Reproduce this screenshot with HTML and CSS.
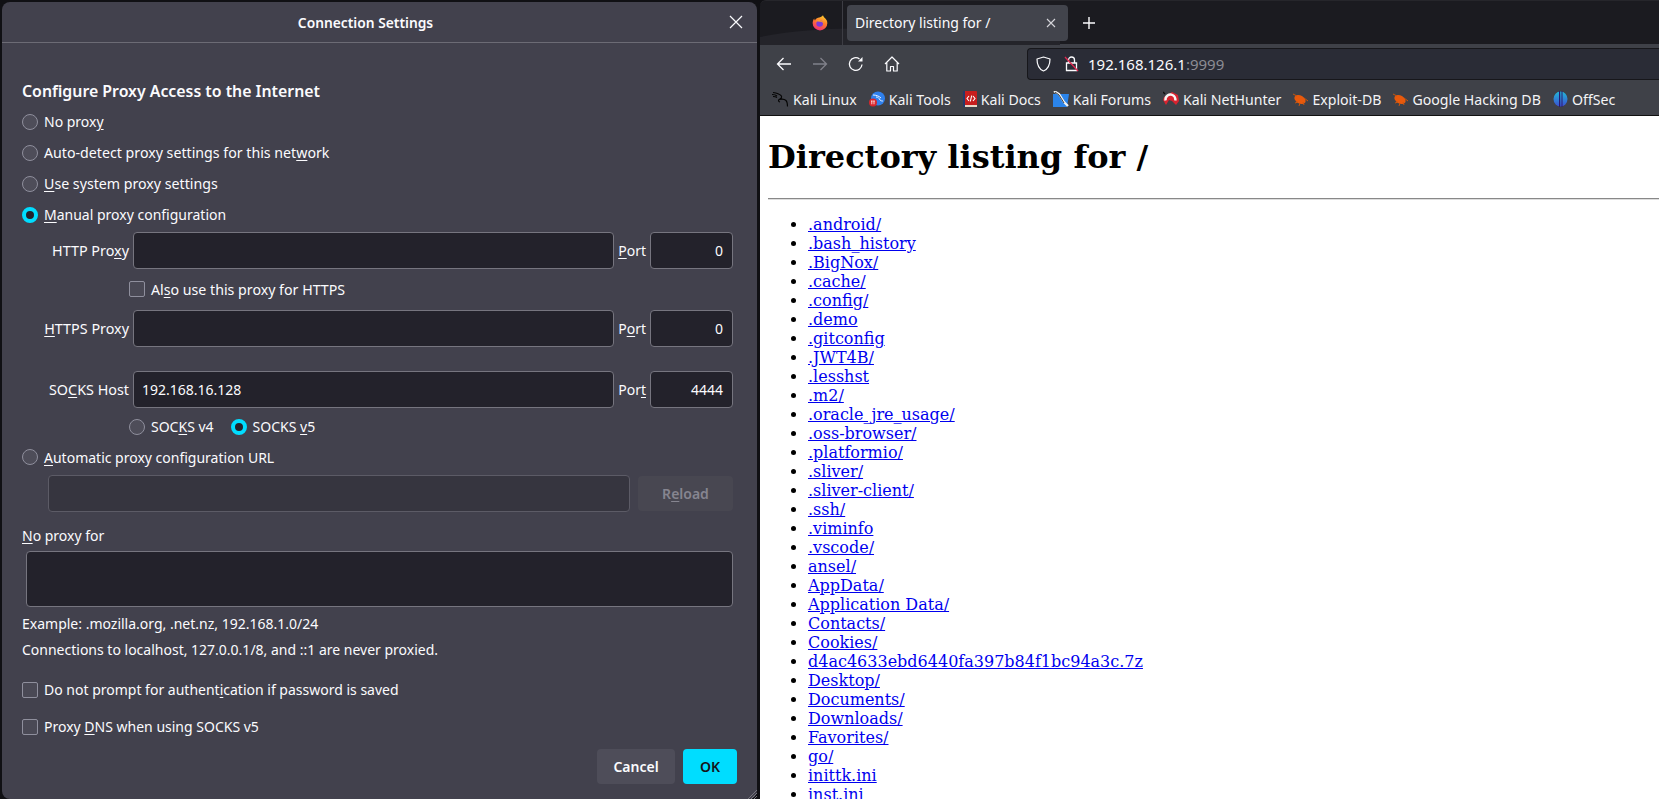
FILE: index.html
```html
<!DOCTYPE html>
<html lang="en">
<head>
<meta charset="utf-8">
<title>Connection Settings</title>
<link rel="stylesheet" href="styles.css">
</head>
<body>
<section class="dialog">
  <header class="dialog-head">
    <span class="dialog-title">Connection Settings</span>
    <svg class="dialog-close" width="14" height="14" viewBox="0 0 14 14"><path d="M1 1l12 12M13 1L1 13" stroke="#fbfbfe" stroke-width="1.2" fill="none"/></svg>
  </header>
  <div class="dialog-body">
    <h2 class="heading">Configure Proxy Access to the Internet</h2>
    <div class="opt"><i class="radio"></i><span>No prox<u>y</u></span></div>
    <div class="opt wide"><i class="radio"></i><span>Auto-detect proxy settings for this net<u>w</u>ork</span></div>
    <div class="opt wide"><i class="radio"></i><span><u>U</u>se system proxy settings</span></div>
    <div class="opt"><i class="radio on"></i><span><u>M</u>anual proxy configuration</span></div>

    <div class="proxy-row first">
      <label>HTTP Pro<u>x</u>y</label><div class="field"></div>
      <label><u>P</u>ort</label><div class="field port">0</div>
    </div>
    <div class="sub-opt check-row wide"><i class="check"></i><span>Al<u>s</u>o use this proxy for HTTPS</span></div>
    <div class="proxy-row https">
      <label><u>H</u>TTPS Proxy</label><div class="field"></div>
      <label>P<u>o</u>rt</label><div class="field port">0</div>
    </div>
    <div class="proxy-row socks">
      <label>SO<u>C</u>KS Host</label><div class="field value">192.168.16.128</div>
      <label>Por<u>t</u></label><div class="field port">4444</div>
    </div>
    <div class="sub-opt socks-row">
      <i class="radio"></i><span>SOC<u>K</u>S v4</span>
      <i class="radio on second"></i><span>SOCKS <u>v</u>5</span>
    </div>
    <div class="opt auto"><i class="radio"></i><span><u>A</u>utomatic proxy configuration URL</span></div>
    <div class="url-row">
      <div class="field disabled"></div>
      <div class="btn-reload">R<u>e</u>load</div>
    </div>
    <div class="noproxy-label"><u>N</u>o proxy for</div>
    <div class="field textarea"></div>
    <p class="hint example">Example: .mozilla.org, .net.nz, 192.168.1.0/24</p>
    <p class="hint localhost">Connections to localhost, 127.0.0.1/8, and ::1 are never proxied.</p>
    <div class="opt prompt"><i class="check"></i><span>Do not prompt for authent<u>i</u>cation if password is saved</span></div>
    <div class="opt dns"><i class="check"></i><span>Proxy <u>D</u>NS when using SOCKS v5</span></div>
    <div class="actions">
      <div class="btn">Cancel</div>
      <div class="btn primary">OK</div>
    </div>
  </div>
  <svg class="grip" width="10" height="10" viewBox="0 0 10 10"><path d="M10 1L1 10M10 4L4 10M10 7L7 10" stroke="#77767f" stroke-width="1" fill="none"/></svg>
</section>

<section class="browser">
  <div class="tabbar">
    <svg class="swoosh" width="300" height="44" viewBox="0 0 300 44"><path d="M0 36C60 24 110 28 170 30L300 31V44H0z" fill="#24242a"/></svg>
    <svg class="ff" width="16" height="17" viewBox="0 0 24 24">
      <defs><linearGradient id="ffg" x1="0.7" y1="0" x2="0.3" y2="1"><stop offset="0" stop-color="#ffd02e"/><stop offset=".45" stop-color="#ff7a2b"/><stop offset="1" stop-color="#ee2a78"/></linearGradient></defs>
      <path d="M16.500 1c.6 2 2 3.200 3.200 4.600C22 8 23 10 23 13a11 11 0 1 1-22 0c0-2.500.8-5 2.300-7 0 1.200.4 2.200 1.200 3 .7-2 2.300-3.500 4.500-4.200C11.500 4 15 3.500 16.500 1z" fill="url(#ffg)"/>
      <circle cx="11.500" cy="13.500" r="5" fill="#7c3ad8"/>
      <path d="M5 10c2-1.500 5-2 8-1.300 2.500.7 4 2.600 4.200 4.800-1-1.700-2.700-2.500-4.700-2.500z" fill="#ff9a2b"/>
    </svg>
    <div class="tab-sep"></div>
    <div class="tab">
      <span class="tab-title">Directory listing for /</span>
      <svg width="10" height="10" viewBox="0 0 10 10"><path d="M1 1l8 8M9 1L1 9" stroke="#d5d5da" stroke-width="1.100" fill="none"/></svg>
    </div>
    <svg class="newtab" width="12" height="12" viewBox="0 0 12 12"><path d="M6 0v12M0 6h12" stroke="#fbfbfe" stroke-width="1.400" fill="none"/></svg>
  </div>
  <div class="navbar">
    <svg class="nav-ic back" width="16" height="16" viewBox="0 0 16 16"><path d="M15 8H1.500M7.500 2L1.500 8l6 6" stroke="#fbfbfe" stroke-width="1.300" fill="none"/></svg>
    <svg class="nav-ic fwd" width="16" height="16" viewBox="0 0 16 16"><path d="M1 8h13.500M8.500 2l6 6-6 6" stroke="#80818a" stroke-width="1.300" fill="none"/></svg>
    <svg class="nav-ic reload" width="16" height="16" viewBox="0 0 16 16"><path d="M14 8.500A6.300 6.300 0 1 1 11.500 3" stroke="#fbfbfe" stroke-width="1.300" fill="none"/><path d="M14.500 1v4.500H10z" fill="#fbfbfe"/></svg>
    <svg class="nav-ic home" width="16" height="16" viewBox="0 0 16 16"><path d="M1 8l7-7 7 7M2.800 6.500V15h3.700v-4.500h3V15h3.700V6.500" stroke="#fbfbfe" stroke-width="1.200" fill="none" stroke-linejoin="round"/></svg>
    <div class="urlbar">
      <svg class="shield" width="15" height="16" viewBox="0 0 15 16"><path d="M7.500 1L14 3c0 6-1.500 10-6.500 12C2.500 13 1 9 1 3z" stroke="#fbfbfe" stroke-width="1.200" fill="none" stroke-linejoin="round"/></svg>
      <svg class="lock" width="15" height="16" viewBox="0 0 15 16"><path d="M4.500 7V4a3 3 0 0 1 6 0v3M2.500 7h10v7.500h-10z" stroke="#fbfbfe" stroke-width="1.300" fill="none"/><path d="M1 1l13 14" stroke="#e22850" stroke-width="1.300"/></svg>
      <span class="url">192.168.126.1<span class="url-port">:9999</span></span>
    </div>
  </div>
  <div class="bookmarks">
    <div class="bm">
      <svg width="17" height="16" viewBox="0 0 17 16"><path d="M1 1.500c3 .5 6 1 8 3 1.500 1.500 0 3.500-2 4 2-.5 5-1 7 1 1.500 1.500 1.500 3.500 1.500 6M0 3.500c2 0 4 .5 5 1.500M1 5.500c1.500 0 3 .3 4 1M7 8.500c-1 1-.5 2 1 2.500" stroke="#050505" stroke-width="1.100" fill="none"/></svg>
      <span>Kali Linux</span></div>
    <div class="bm">
      <svg width="16" height="16" viewBox="0 0 16 16"><circle cx="9" cy="7.500" r="7" fill="#2f80ed"/><path d="M4 4c3 0 6 1 8 3M7 6c2 0 3 1 4 3 1 1 2 1 3 1" stroke="#e8f1ff" stroke-width="1" fill="none"/><circle cx="4" cy="11.500" r="4" fill="#d8262c"/><path d="M2.800 10v3.300M5 10v3.300M2 10h1.600M4.200 10h1.600" stroke="#fff" stroke-width=".8"/></svg>
      <span>Kali Tools</span></div>
    <div class="bm">
      <svg width="14" height="16" viewBox="0 0 14 16"><rect x="0" y="0" width="14" height="15" fill="#c81e1e" rx="1"/><rect x="0" y="0" width="2" height="16" fill="#243a6b"/><rect x="2" y="14" width="12" height="2" fill="#e8d8c8"/><path d="M6 5L4 7.500 6 10M10 5l2 2.500L10 10M8.700 4.500L7.300 10.500" stroke="#fff" stroke-width="1.100" fill="none"/></svg>
      <span>Kali Docs</span></div>
    <div class="bm">
      <svg width="16" height="16" viewBox="0 0 16 16"><path d="M0 3h16l-2 13H0z" fill="#2b84ea"/><path d="M1 0l5 3 5 8 4 4" stroke="#f4f4f4" stroke-width="2.200" fill="none"/><path d="M2 1l4 3 5 8" stroke="#111" stroke-width=".8" fill="none"/></svg>
      <span>Kali Forums</span></div>
    <div class="bm">
      <svg width="16" height="16" viewBox="0 0 16 16"><path d="M1 6L9 1l6 3 1 6-3 4-4-4-3-1-3 5-3-5z" fill="#d8232f"/><path d="M2.500 9.500C2 5 6 2.500 9.500 4c2 .9 3 2.500 3 5.500" stroke="#f5f5f5" stroke-width="2.400" fill="none"/><path d="M0 1l2 2" stroke="#111" stroke-width="1.500"/></svg>
      <span>Kali NetHunter</span></div>
    <div class="bm">
      <svg width="15" height="15" viewBox="0 0 15 15"><ellipse cx="7" cy="7.500" rx="6" ry="4" transform="rotate(30 7 7.500)" fill="#e8590c"/><path d="M0 2l4 2M2 11l3-1M6 14l1-3M11 13l-1-3M11 6l4 3" stroke="#c9560f" stroke-width="1"/></svg>
      <span>Exploit-DB</span></div>
    <div class="bm">
      <svg width="15" height="15" viewBox="0 0 15 15"><ellipse cx="7" cy="7.500" rx="6" ry="4" transform="rotate(30 7 7.500)" fill="#e8590c"/><path d="M0 2l4 2M2 11l3-1M6 14l1-3M11 13l-1-3M11 6l4 3" stroke="#c9560f" stroke-width="1"/></svg>
      <span>Google Hacking DB</span></div>
    <div class="bm">
      <svg width="15" height="16" viewBox="0 0 15 16"><defs><linearGradient id="osg" x1="0" y1="0" x2="0" y2="1"><stop offset="0" stop-color="#22b8d8"/><stop offset="1" stop-color="#3b4fd0"/></linearGradient></defs><ellipse cx="7.500" cy="8" rx="7" ry="7.500" fill="url(#osg)"/><path d="M6 0h1.200v16H6zM8.500 0h1v16h-1z" fill="#2a1a6e"/></svg>
      <span>OffSec</span></div>
  </div>
  <main class="page">
    <h1>Directory listing for /</h1>
    <hr>
    <ul>
      <li><a href="#">.android/</a></li>
      <li><a href="#">.bash_history</a></li>
      <li><a href="#">.BigNox/</a></li>
      <li><a href="#">.cache/</a></li>
      <li><a href="#">.config/</a></li>
      <li><a href="#">.demo</a></li>
      <li><a href="#">.gitconfig</a></li>
      <li><a href="#">.JWT4B/</a></li>
      <li><a href="#">.lesshst</a></li>
      <li><a href="#">.m2/</a></li>
      <li><a href="#">.oracle_jre_usage/</a></li>
      <li><a href="#">.oss-browser/</a></li>
      <li><a href="#">.platformio/</a></li>
      <li><a href="#">.sliver/</a></li>
      <li><a href="#">.sliver-client/</a></li>
      <li><a href="#">.ssh/</a></li>
      <li><a href="#">.viminfo</a></li>
      <li><a href="#">.vscode/</a></li>
      <li><a href="#">ansel/</a></li>
      <li><a href="#">AppData/</a></li>
      <li><a href="#">Application Data/</a></li>
      <li><a href="#">Contacts/</a></li>
      <li><a href="#">Cookies/</a></li>
      <li><a href="#">d4ac4633ebd6440fa397b84f1bc94a3c.7z</a></li>
      <li><a href="#">Desktop/</a></li>
      <li><a href="#">Documents/</a></li>
      <li><a href="#">Downloads/</a></li>
      <li><a href="#">Favorites/</a></li>
      <li><a href="#">go/</a></li>
      <li><a href="#">inittk.ini</a></li>
      <li><a href="#">inst.ini</a></li>
    </ul>
  </main>
</section>
</body>
</html>
```

FILE: styles.css
```css
* { box-sizing: border-box; }
html, body { margin: 0; height: 100%; }
body {
  width: 1659px;
  height: 799px;
  overflow: hidden;
  display: flex;
  background: #101014;
  font-family: "Noto Sans", sans-serif;
  font-size: 14px;
  color: #fbfbfe;
}

/* dialog */
.dialog {
  position: relative;
  width: 755px;
  height: 797px;
  margin: 2px 0 0 2px;
  background: #42414d;
  border-radius: 8px;
  flex: none;
}
.dialog-head {
  position: relative;
  height: 41px;
  border-bottom: 1px solid #6c6b75;
  display: flex;
  align-items: center;
  justify-content: center;
  padding-right: 28px;
}
.dialog-title { font-weight: 600; font-size: 13.8px; }
.dialog-close { position: absolute; right: 14px; top: 13px; }
.dialog-body { padding: 36px 20px 0; }
.heading { margin: 0 0 3px; height: 24px; line-height: 24px; font-size: 15.85px; font-weight: 600; }
u { text-underline-offset: 2px; text-decoration-thickness: 1px; }
.opt { height: 31px; display: flex; align-items: center; gap: 6px; }
.wide { font-size: 14.2px; }
.radio {
  flex: none;
  width: 16px;
  height: 16px;
  border-radius: 50%;
  background: #4e4d59;
  border: 1px solid #8f8f9d;
}
.radio.on { background: #23222b; border: 4px solid #00ddff; }
.radio.second { margin-left: 11px; }
.check {
  flex: none;
  width: 16px;
  height: 16px;
  border-radius: 2px;
  background: #4a4955;
  border: 1px solid #8f8f9d;
}
.proxy-row { display: flex; align-items: center; height: 37px; }
.proxy-row.first { margin-top: 2px; }
.proxy-row.https { margin-top: 4px; }
.proxy-row.socks { margin-top: 24px; }
.proxy-row label { flex: none; text-align: right; width: 107px; margin-right: 4px; white-space: nowrap; font-size: 14.35px; }
.proxy-row label:nth-of-type(2) { width: 29px; margin-left: 3px; font-size: 14px; }
.field {
  height: 37px;
  width: 481px;
  flex: none;
  background: #23222b;
  border: 1px solid #76757f;
  border-radius: 4px;
  padding: 0 8px;
  line-height: 35px;
}
.field.port { width: 83px; text-align: right; padding-right: 9px; }
.sub-opt { display: flex; align-items: center; gap: 6px; margin-left: 107px; }
.check-row { height: 37px; padding-top: 3px; }
.socks-row { height: 37px; }
.opt.auto { height: 24px; }
.url-row { display: flex; align-items: center; gap: 8px; margin: 6px 0 0 26px; }
.field.disabled { width: 582px; background: #36353f; border-color: #5c5b66; }
.btn-reload {
  width: 95px;
  height: 35px;
  line-height: 35px;
  text-align: center;
  border-radius: 4px;
  background: #484751;
  color: #868590;
  font-weight: 600;
}
.noproxy-label { margin-top: 14px; height: 20px; line-height: 20px; }
.field.textarea { width: 707px; height: 56px; margin: 5px 0 0 4px; }
.hint { margin: 0; height: 20px; line-height: 20px; }
.example { margin-top: 7px; }
.localhost { margin-top: 6px; }
.opt.prompt { margin-top: 11px; height: 37px; }
.opt.dns { height: 37px; }
.actions { display: flex; justify-content: flex-end; gap: 8px; margin-top: 4px; }
.btn {
  height: 35px;
  width: 78px;
  line-height: 35px;
  text-align: center;
  border-radius: 4px;
  background: #4e4d59;
  font-weight: 600;
}
.btn.primary { width: 54px; background: #00ddff; color: #15141a; }
.grip { position: absolute; right: 0; bottom: 0; }

/* browser */
.browser {
  width: 899px;
  margin-left: 3px;
  flex: none;
  display: flex;
  flex-direction: column;
  height: 799px;
}
.tabbar {
  position: relative;
  height: 44px;
  flex: none;
  background: #1b1b20;
  border-top: 1px solid #26262b;
  border-top-left-radius: 6px;
  display: flex;
  align-items: center;
}
.swoosh { position: absolute; left: 0; top: 0; }
.ff { position: relative; margin-left: 52px; }
.tab-sep { position: relative; width: 1px; height: 44px; margin-left: 14px; background: #3d3d44; }
.tab {
  position: relative;
  margin-left: 4px;
  width: 221px;
  height: 36px;
  background: #42444c;
  border-radius: 4px;
  display: flex;
  align-items: center;
  justify-content: space-between;
  padding: 0 12px 0 8px;
}
.newtab { position: relative; margin-left: 15px; }
.navbar {
  height: 38px;
  flex: none;
  background: #3f4148;
  display: flex;
  align-items: center;
  padding: 2px 0 0 16px;
}
.nav-ic { flex: none; margin-right: 20px; }
.urlbar {
  margin-left: 107px;
  flex: 1;
  height: 32px;
  background: #2a2c36;
  border: 1px solid #17171b;
  border-right: 0;
  border-radius: 4px 0 0 4px;
  display: flex;
  align-items: center;
  padding-left: 8px;
}
.lock { margin-left: 13px; }
.url { margin-left: 9px; font-size: 15px; }
.url-port { color: #8c8d94; }
.bookmarks {
  height: 34px;
  flex: none;
  background: #3f4148;
  border-bottom: 1px solid #111;
  display: flex;
  align-items: center;
  padding: 1px 0 0 12px;
  gap: 12px;
}
.bm { display: flex; align-items: center; gap: 4px; white-space: nowrap; font-size: 14.15px; color: #f4f4f6; }
.page {
  flex: 1;
  min-height: 0;
  overflow: hidden;
  background: #fff;
  color: #000;
  padding: 8px;
  font-family: "DejaVu Serif", serif;
  font-size: 16px;
}
h1 { font-size: 32px; font-weight: 700; margin: 15px 0 22px; line-height: 37px; }
hr { margin: 8px -8px 7px 0; border: 0; border-top: 1px solid #888; border-bottom: 1px solid #ddd; }
ul { margin: 15px 0 16px; padding-left: 40px; }
li { line-height: 19px; }
a { color: #0000ee; }
```
